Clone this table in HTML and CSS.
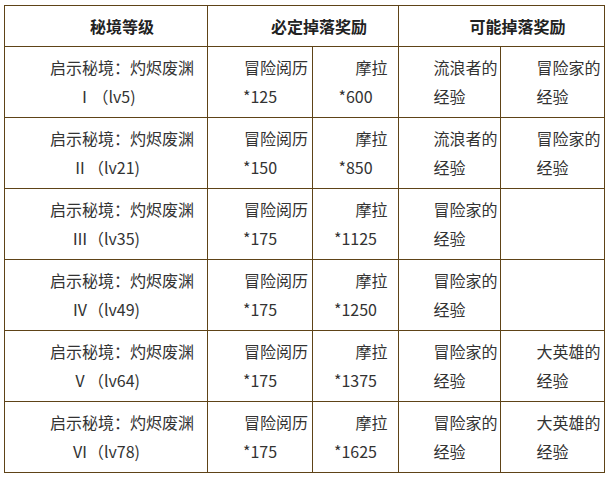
FILE: index.html
```html
<!DOCTYPE html>
<html lang="zh-CN">
<head>
<meta charset="utf-8">
<title>秘境掉落</title>
<link rel="stylesheet" href="styles.css">
</head>
<body>
<div class="wrap">
<table class="drops">
<colgroup>
<col class="c1"><col class="c2"><col class="c3"><col class="c4"><col class="c5">
</colgroup>
<thead>
<tr class="head">
<th>秘境等级</th>
<th colspan="2">必定掉落奖励</th>
<th colspan="2">可能掉落奖励</th>
</tr>
</thead>
<tbody>
<tr>
<td>启示秘境：灼烬废渊<br>Ⅰ（lv5)</td>
<td>冒险阅历<br>*125</td>
<td>摩拉<br>*600</td>
<td>流浪者的<br>经验</td>
<td>冒险家的<br>经验</td>
</tr>
<tr>
<td>启示秘境：灼烬废渊<br>Ⅱ（lv21)</td>
<td>冒险阅历<br>*150</td>
<td>摩拉<br>*850</td>
<td>流浪者的<br>经验</td>
<td>冒险家的<br>经验</td>
</tr>
<tr>
<td>启示秘境：灼烬废渊<br>Ⅲ（lv35)</td>
<td>冒险阅历<br>*175</td>
<td>摩拉<br>*1125</td>
<td>冒险家的<br>经验</td>
<td></td>
</tr>
<tr>
<td>启示秘境：灼烬废渊<br>Ⅳ（lv49)</td>
<td>冒险阅历<br>*175</td>
<td>摩拉<br>*1250</td>
<td>冒险家的<br>经验</td>
<td></td>
</tr>
<tr>
<td>启示秘境：灼烬废渊<br>Ⅴ（lv64)</td>
<td>冒险阅历<br>*175</td>
<td>摩拉<br>*1375</td>
<td>冒险家的<br>经验</td>
<td>大英雄的<br>经验</td>
</tr>
<tr>
<td>启示秘境：灼烬废渊<br>Ⅵ（lv78)</td>
<td>冒险阅历<br>*175</td>
<td>摩拉<br>*1625</td>
<td>冒险家的<br>经验</td>
<td>大英雄的<br>经验</td>
</tr>
</tbody>
</table>
</div>
</body>
</html>
```

FILE: styles.css
```css
html, body {
  margin: 0;
  padding: 0;
  background: #ffffff;
}

.wrap {
  padding: 5px 0 0 4px;
}

.drops {
  border-collapse: collapse;
  table-layout: fixed;
  width: 600px;
  font-family: "Noto Sans CJK SC", "Noto Sans", sans-serif;
  font-size: 16px;
  color: #333333;
}

.c1 { width: 203px; }
.c2 { width: 105px; }
.c3 { width: 86px; }
.c4 { width: 102px; }
.c5 { width: 104px; }

.drops th,
.drops td {
  border: 1px solid #5e4317;
  padding: 0 2px;
  text-align: center;
  text-indent: 2em;
  vertical-align: middle;
  line-height: 29px;
  white-space: nowrap;
}

.drops th {
  font-weight: bold;
  color: #222222;
}

.head {
  height: 41px;
}

.drops tbody tr {
  height: 71px;
}
```
